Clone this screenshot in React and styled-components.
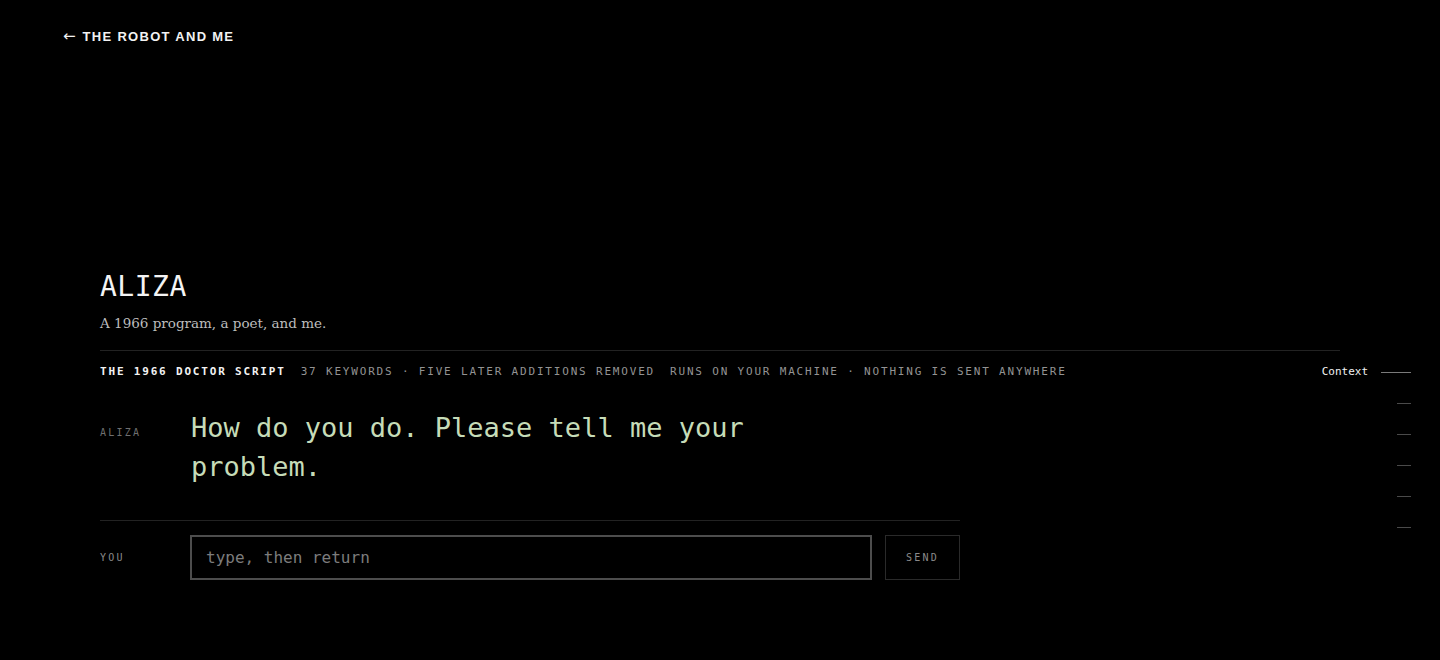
import React from 'react';
import styled, { createGlobalStyle } from 'styled-components';

const mono = `"DejaVu Sans Mono", "Liberation Mono", monospace`;

const GlobalStyle = createGlobalStyle`
    html, body {
        margin: 0;
        padding: 0;
        background: #000;
    }
    * {
        box-sizing: border-box;
    }
`

const Page = styled.div`
    position: relative;
    min-height: 660px;
    background: #000;
    color: #eee;
    overflow: hidden;
`

const Header = styled.header`
    height: 72px;
    display: flex;
    align-items: center;
    padding-left: 63px;
`

const BackLink = styled.a`
    display: flex;
    align-items: center;
    gap: 7px;
    font-family: "Liberation Sans", Arial, sans-serif;
    font-weight: 700;
    font-size: 13px;
    letter-spacing: 0.1em;
    color: #f2f2f2;
    text-decoration: none;
    cursor: pointer;
`

const Arrow = styled.span`
    font-family: "DejaVu Sans", sans-serif;
    font-weight: 400;
    font-size: 15px;
    letter-spacing: 0;
`

const Main = styled.main`
    padding: 198px 100px 0;
`

const Title = styled.h1`
    margin: 0;
    font-family: ${mono};
    font-weight: 400;
    font-size: 28px;
    line-height: 34px;
    letter-spacing: 0.5px;
    color: #f4f4f4;
`

const Subtitle = styled.p`
    margin: 8px 0 0;
    font-family: "DejaVu Serif", "Liberation Serif", serif;
    font-size: 13.5px;
    line-height: 22px;
    color: #bdbdbd;
`

const MetaBar = styled.div`
    margin-top: 16px;
    border-top: 1px solid #222;
    padding: 14px 0;
    display: flex;
    gap: 15px;
    font-family: ${mono};
    font-size: 11px;
    line-height: 14px;
    letter-spacing: 0.165em;
    text-transform: uppercase;
`

const MetaItem = styled.span`
    color: ${p => (p.$strong ? '#f2f2f2' : '#939393')};
    font-weight: ${p => (p.$strong ? 700 : 400)};
`

const Chat = styled.section`
    width: 860px;
`

const Row = styled.div`
    display: grid;
    grid-template-columns: 90px 1fr;
    align-items: ${p => (p.$center ? 'center' : 'start')};
`

const MessageRow = styled(Row)`
    padding: 15px 0 34px;
    border-bottom: 1px solid #222;
`

const Speaker = styled.span`
    font-family: ${mono};
    font-size: 10px;
    line-height: 14px;
    letter-spacing: 0.22em;
    color: ${p => (p.$you ? '#8a8a8a' : '#6f6f6f')};
    margin-top: ${p => (p.$you ? 0 : '18px')};
`

const Message = styled.p`
    margin: 0;
    max-width: 600px;
    font-family: ${mono};
    font-size: 27px;
    line-height: 39px;
    color: #c6dcb8;
    padding-left: 1px;
`

const InputRow = styled(Row)`
    padding-top: 14px;
`

const Composer = styled.form`
    display: flex;
    gap: 13px;
`

const TextInput = styled.input`
    flex: 1;
    height: 45px;
    background: #000;
    border: 2px solid #4d4d4d;
    padding: 0 14px;
    font-family: ${mono};
    font-size: 16px;
    color: #e6e6e6;
    caret-color: #eee;
    outline: none;
    &::placeholder {
        color: #7c7c7c;
    }
`

const SendButton = styled.button`
    width: 75px;
    height: 45px;
    background: #000;
    border: 1px solid #2a2a2a;
    font-family: ${mono};
    font-size: 10px;
    letter-spacing: 0.22em;
    color: #8a8a8a;
    cursor: pointer;
`

const SideNav = styled.nav`
    position: absolute;
    top: 371px;
    right: 29px;
    display: flex;
    flex-direction: column;
    align-items: flex-end;
    gap: 30px;
`

const NavItem = styled.div`
    display: flex;
    align-items: center;
    gap: 13px;
    height: 2px;
    font-family: ${mono};
    font-size: 11px;
    line-height: 14px;
    color: #f2f2f2;
`

const NavLine = styled.span`
    display: block;
    width: ${p => p.$w}px;
    height: 1px;
    background: ${p => (p.$active ? '#7a7a7a' : '#4a4a4a')};
`

export default function App() {
    return (
        <>
            <GlobalStyle />
            <Page>
                <Header>
                    <BackLink>
                        <Arrow>←</Arrow>
                        THE ROBOT AND ME
                    </BackLink>
                </Header>
                <Main>
                    <Title>ALIZA</Title>
                    <Subtitle>A 1966 program, a poet, and me.</Subtitle>
                    <MetaBar>
                        <MetaItem $strong>The 1966 Doctor Script</MetaItem>
                        <MetaItem>37 keywords · five later additions removed</MetaItem>
                        <MetaItem>Runs on your machine · nothing is sent anywhere</MetaItem>
                    </MetaBar>
                    <Chat>
                        <MessageRow>
                            <Speaker>ALIZA</Speaker>
                            <Message>How do you do. Please tell me your problem.</Message>
                        </MessageRow>
                        <InputRow $center>
                            <Speaker $you>YOU</Speaker>
                            <Composer onSubmit={e => e.preventDefault()}>
                                <TextInput autoFocus placeholder="type, then return" />
                                <SendButton type="submit">SEND</SendButton>
                            </Composer>
                        </InputRow>
                    </Chat>
                </Main>
                <SideNav>
                    <NavItem>
                        Context
                        <NavLine $w={30} $active />
                    </NavItem>
                    {[0, 1, 2, 3, 4].map(i => (
                        <NavLine key={i} $w={14} />
                    ))}
                </SideNav>
            </Page>
        </>
    );
}
